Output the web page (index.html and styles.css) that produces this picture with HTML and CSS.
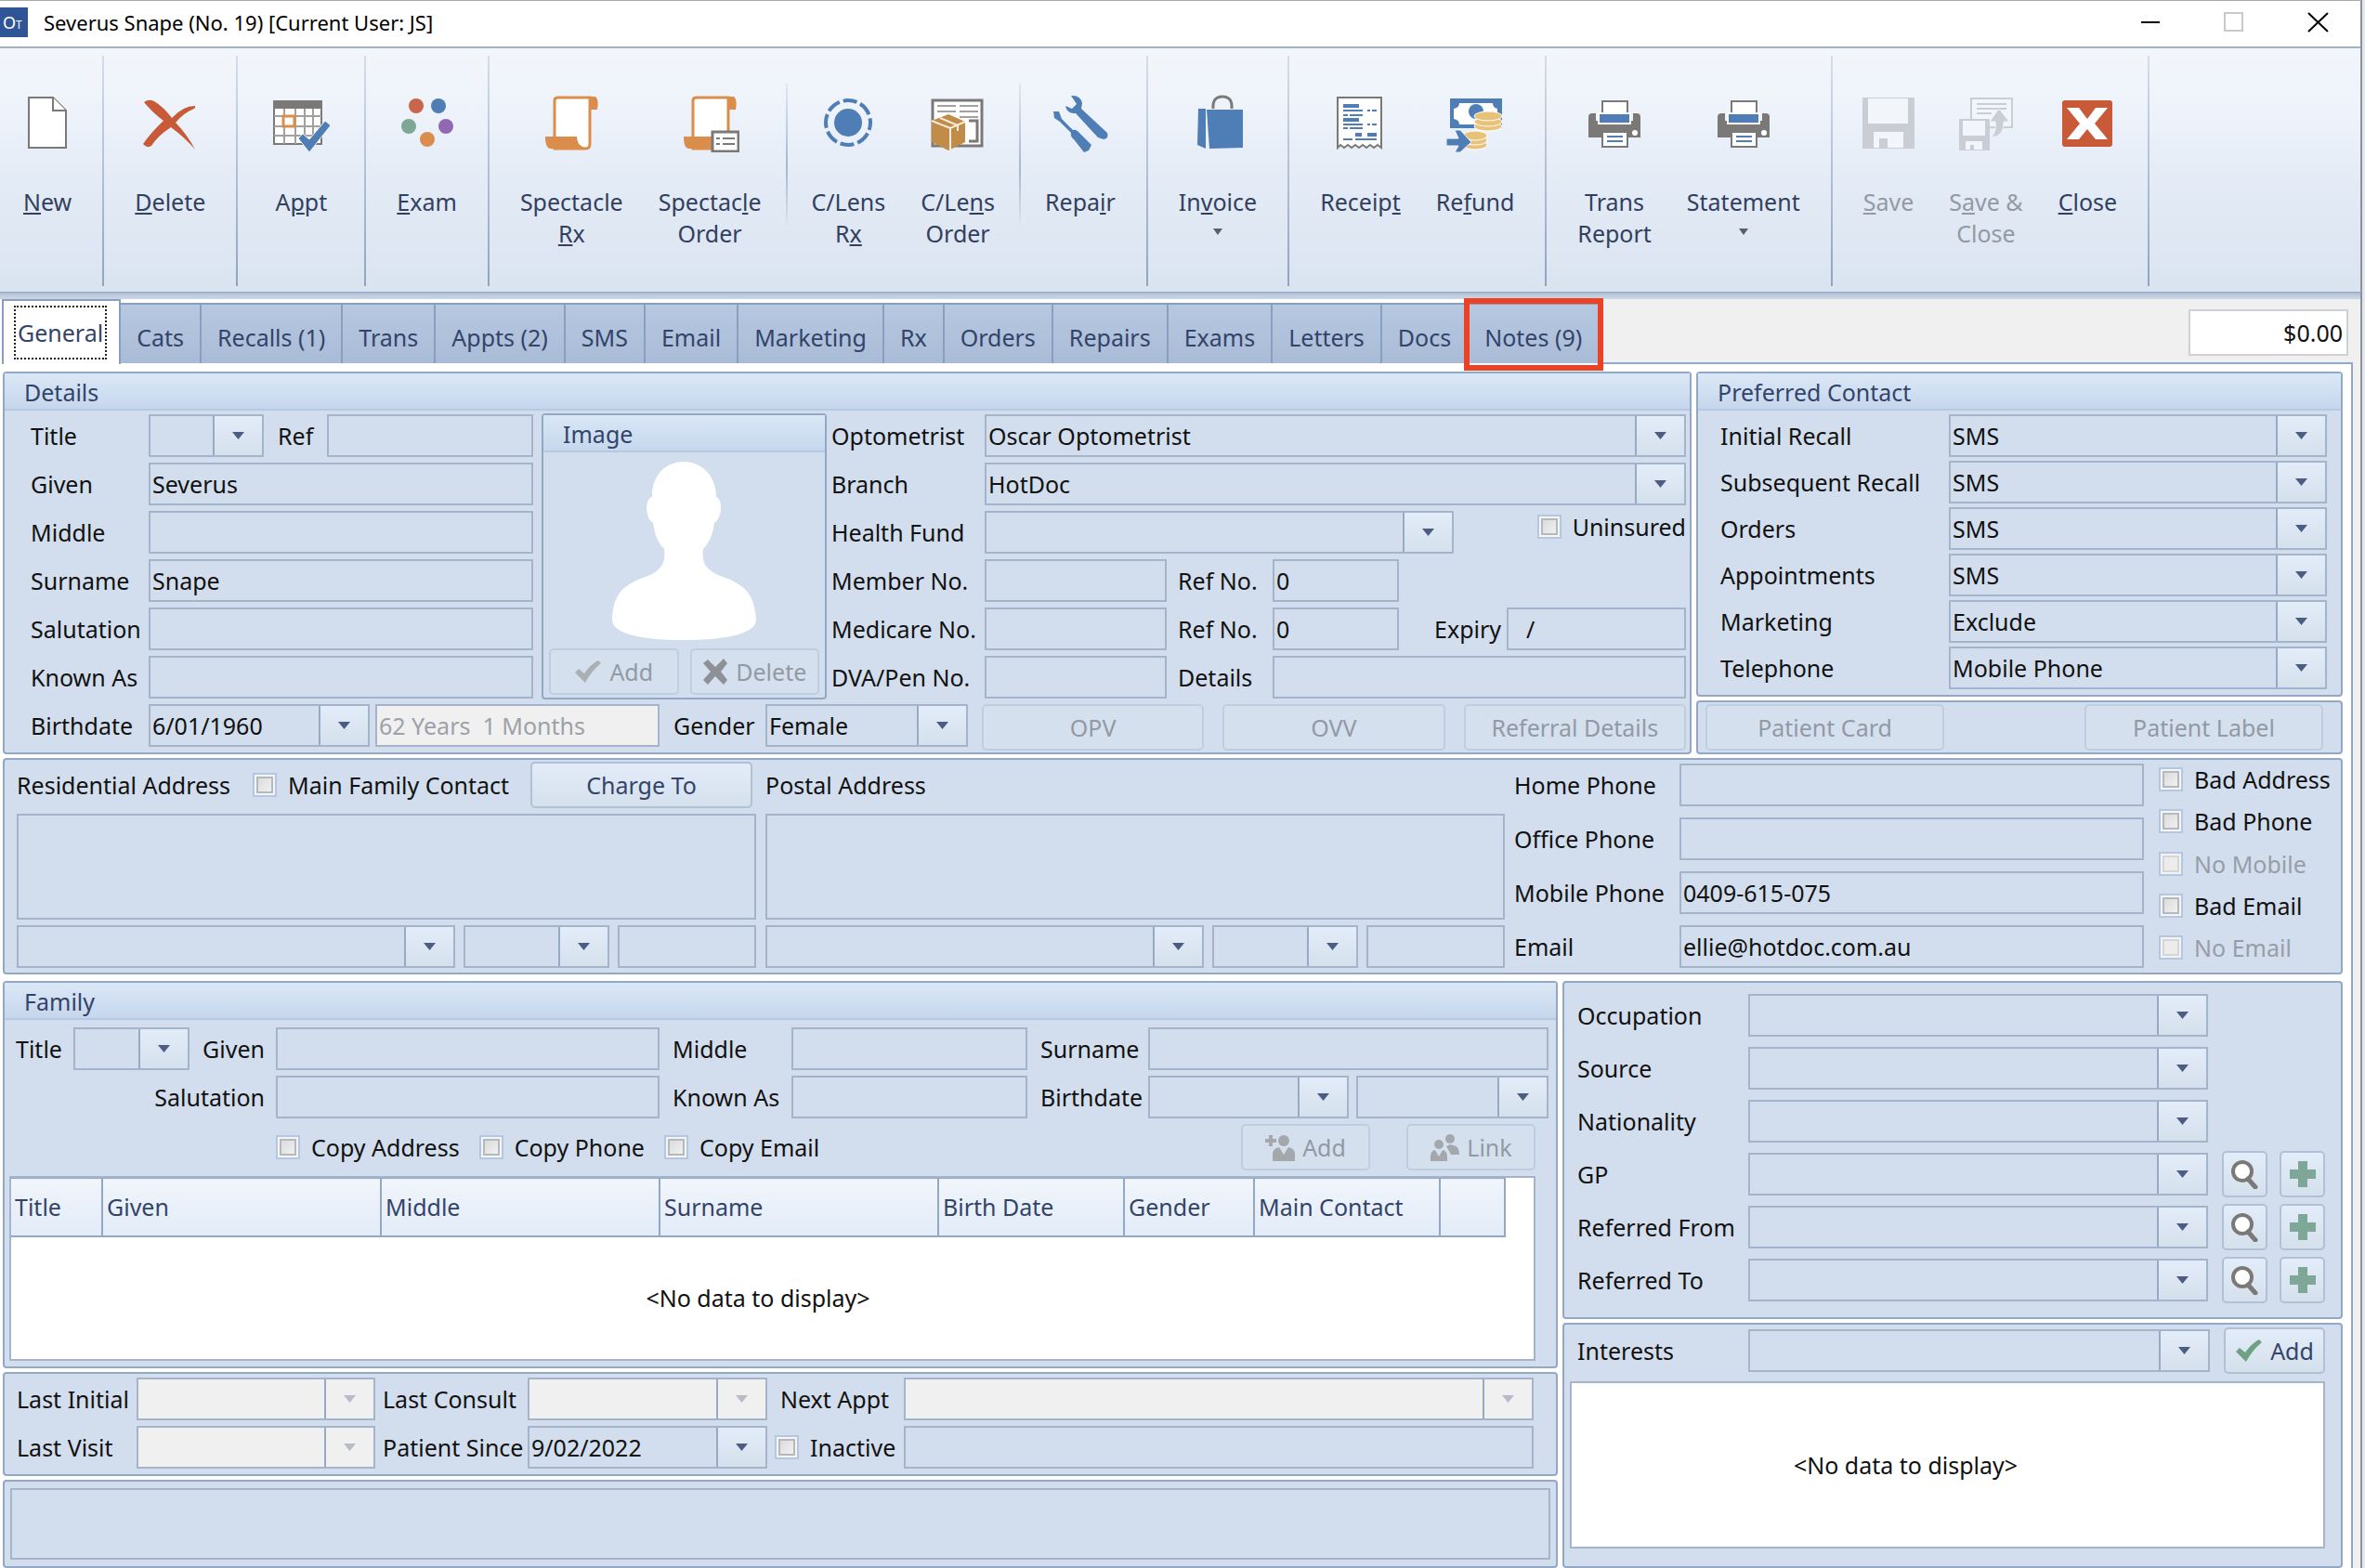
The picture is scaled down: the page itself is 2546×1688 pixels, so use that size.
FILE: index.html
```html
<!DOCTYPE html>
<html lang="en">
<head>
    <meta charset="UTF-8">
    <meta name="viewport" content="width=device-width, initial-scale=1.0">
    <title>Severus Snape (No. 19) [Current User: JS]</title>
    <link rel="stylesheet" href="styles.css">
</head>
<body>
    <!-- Shared icons -->
    <svg class="sprite" xmlns="http://www.w3.org/2000/svg">
        <symbol id="i-printer" viewBox="0 0 64 64">
            <path d="M4 26q0-4 4-4h4v8h40v-8h4q4 0 4 4v22H4z" fill="#7b7977"/>
            <rect x="19" y="9" width="27" height="20" fill="#fff" stroke="#7b7977" stroke-width="2"/>
            <rect x="15" y="22" width="34" height="11" fill="#4f7db5" stroke="#fff" stroke-width="2"/>
            <rect x="19" y="42" width="27" height="16" fill="#fff" stroke="#7b7977" stroke-width="2"/>
            <path d="M24 47h17M24 52h17" stroke="#4f7db5" stroke-width="2"/>
            <circle cx="54" cy="43" r="3" fill="#fff"/>
        </symbol>
        <symbol id="i-check" viewBox="0 0 30 26">
            <path d="M1 14l4-4 6 5Q18 5 26 1l3 3Q19 12 12 25z" fill="currentColor"/>
        </symbol>
        <symbol id="i-search" viewBox="0 0 30 32">
            <circle cx="12" cy="13" r="10" fill="#fff" stroke="#7b7977" stroke-width="4"/>
            <path d="M18 21l8 9" stroke="#7b7977" stroke-width="5" stroke-linecap="round"/>
        </symbol>
        <symbol id="i-plus" viewBox="0 0 28 28">
            <path d="M9 0h10v9h9v10h-9v9H9v-9H0V9h9z" fill="#7fa797"/>
        </symbol>
        <symbol id="i-scroll" viewBox="0 0 64 64">
            <path d="M14 4h44q4 3 2 14h-8V7z" fill="#db8d4c"/>
            <path d="M14 8q0-3 4-3h34v50q0 5-5 5H14z" fill="#fff" stroke="#db8d4c" stroke-width="3"/>
            <path d="M4 47h34q0 9 8 12l-1 1H10q-6 0-6-13z" fill="#db8d4c"/>
        </symbol>
    </svg>

    <div class="window">
        <header class="titlebar">
            <span class="app-logo">O<small>T</small></span>
            <h1 class="window-title">Severus Snape (No. 19) [Current User: JS]</h1>
            <div class="window-controls">
                <button aria-label="Minimise"><svg width="24" height="24"><path d="M1 12h20" stroke="#000" stroke-width="2"/></svg></button>
                <button aria-label="Maximise" disabled><svg width="24" height="24"><rect x="1" y="2" width="19" height="19" fill="none" stroke="#c9c9c9" stroke-width="2"/></svg></button>
                <button aria-label="Close window"><svg width="24" height="24"><path d="M1 2l21 20M22 2L1 22" stroke="#000" stroke-width="2"/></svg></button>
            </div>
        </header>

        <nav class="ribbon" aria-label="Actions">
            <div class="ribbon-group">
                <button class="ribbon-button">
                    <svg viewBox="0 0 64 64"><path d="M12 5h26l14 14v40H12z" fill="#fff" stroke="#7b7977" stroke-width="2"/><path d="M38 5v14h14" fill="#fff" stroke="#7b7977" stroke-width="2"/></svg>
                    <span><u>N</u>ew</span>
                </button>
            </div>
            <div class="ribbon-group">
                <button class="ribbon-button">
                    <svg viewBox="0 0 64 64"><path d="M4 10q5-4 11-1 10 6 19 18Q46 14 59 14q1 2-1 3-12 5-20 15 12 12 21 29Q48 48 33 37 19 46 12 57q-5 3-9-2Q12 42 25 30 13 21 4 10z" fill="#c85a38"/></svg>
                    <span><u>D</u>elete</span>
                </button>
            </div>
            <div class="ribbon-group">
                <button class="ribbon-button wide">
                    <svg viewBox="0 0 64 64"><path d="M3 9h51v46H3z" fill="#fff" stroke="#7b7977" stroke-width="2"/><path d="M2 8h53v9H2z" fill="#7b7977"/><path d="M14 17v38M26 17v38M36 17v38M45 17v38M3 25h51M3 36h51M3 46h51" stroke="#a3a1a0" stroke-width="2"/><rect x="13" y="25" width="12" height="11" fill="#fff" stroke="#db8d4c" stroke-width="3"/><path d="M29 49l5-5 7 6 17-20 6 5-23 29z" fill="#4f7db5" stroke="#f2f6fc"/></svg>
                    <span>A<u>p</u>pt</span>
                </button>
            </div>
            <div class="ribbon-group">
                <button class="ribbon-button">
                    <svg viewBox="0 0 64 64"><circle cx="20" cy="14" r="8" fill="#c9664a"/><circle cx="44" cy="14" r="8" fill="#4f7db5"/><circle cx="12" cy="36" r="8" fill="#7fa797"/><circle cx="52" cy="36" r="8" fill="#9268b4"/><circle cx="32" cy="50" r="8" fill="#db8d4c"/></svg>
                    <span><u>E</u>xam</span>
                </button>
            </div>
            <div class="ribbon-group">
                <button class="ribbon-button">
                    <svg><use href="#i-scroll"/></svg>
                    <span>Spectacle<br><u>R</u>x</span>
                </button>
                <button class="ribbon-button">
                    <svg viewBox="0 0 64 64"><use href="#i-scroll"/><rect x="35" y="42" width="28" height="21" fill="#fff" stroke="#7b7977" stroke-width="3"/><path d="M39 49h4M39 55h4M46 49h13M46 55h13" stroke="#7b7977" stroke-width="2"/></svg>
                    <span>Spectac<u>l</u>e<br>Order</span>
                </button>
                <i class="ribbon-divider"></i>
                <button class="ribbon-button">
                    <svg viewBox="0 0 64 64"><circle cx="32" cy="32" r="15" fill="#4f7db5"/><circle cx="32" cy="32" r="24" fill="none" stroke="#4f7db5" stroke-width="4" stroke-dasharray="15 4" stroke-dashoffset="7"/></svg>
                    <span>C/Lens<br>R<u>x</u></span>
                </button>
                <button class="ribbon-button">
                    <svg viewBox="0 0 64 64"><rect x="5" y="8" width="53" height="49" fill="#fff" stroke="#7b7977" stroke-width="3"/><path d="M10 14h20M34 14h20M10 20h20M34 20h20M34 26h20" stroke="#a3a1a0" stroke-width="2"/><path d="M44 30h9v22h-9" fill="none" stroke="#7b7977" stroke-width="3"/><path d="M4 30l18-7 18 8v22L22 62 4 53z" fill="#c08c48"/><path d="M4 30l20 8 16-7M24 38v23M13 27l19 8v6" fill="none" stroke="#f7eddc" stroke-width="2"/></svg>
                    <span>C/Le<u>n</u>s<br>Order</span>
                </button>
                <i class="ribbon-divider"></i>
                <button class="ribbon-button">
                    <svg viewBox="0 0 64 64"><path d="M22 3q10-1 12 8l-1 6 28 26q2 6-4 7l-6-2-24-26q-9 1-11-8l7 3 5-5z" fill="#4f7db5"/><path d="M3 20l6 0 3 8 12 12q3-1 6 2l14 14-3 6-5 2-11-14q-4-3-3-7L10 31l-6-4z" fill="#4f7db5"/></svg>
                    <span>Repa<u>i</u>r</span>
                </button>
            </div>
            <div class="ribbon-group">
                <button class="ribbon-button">
                    <svg viewBox="0 0 64 64"><path d="M27 17q-1-13 10-13t10 13" fill="none" stroke="#7b7977" stroke-width="3"/><path d="M20 18h39v41l-36 1z" fill="#4f7db5"/><path d="M11 17h8v43l-9-4z" fill="#4f7db5"/></svg>
                    <span>In<u>v</u>oice<br><b class="caret"></b></span>
                </button>
            </div>
            <div class="ribbon-group">
                <button class="ribbon-button">
                    <svg viewBox="0 0 64 64"><path d="M8 5h47v54l-4-3-4 3-4-3-4 3-4-3-4 3-4-3-4 3-4-3-4 3-4-3-3 3z" fill="#fff" stroke="#7b7977" stroke-width="2"/><path d="M14 14h17M14 29h17M27 45h7M40 45h10" stroke="#4f7db5" stroke-width="4"/><path d="M14 19h21M40 19h3M45 19h5M14 24h5M21 24h14M14 34h21M40 34h3M45 34h5M14 38h5M21 38h14M14 50h10M27 50h23" stroke="#4f7db5" stroke-width="2"/></svg>
                    <span>Receip<u>t</u></span>
                </button>
                <button class="ribbon-button">
                    <svg viewBox="0 0 64 64"><path d="M5 6h56v32H5z" fill="#4f7db5"/><path d="M15 11h36q0 5 5 6v11q-5 1-5 6H15q0-5-6-6V17q6-1 6-6z" fill="#fff"/><circle cx="33" cy="20" r="8" fill="#4f7db5"/><g fill="#e9c27a" stroke="#fff"><ellipse cx="46" cy="36" rx="15" ry="5"/><ellipse cx="46" cy="31" rx="15" ry="5"/><ellipse cx="46" cy="25" rx="15" ry="5"/><ellipse cx="32" cy="56" rx="13" ry="5"/><ellipse cx="32" cy="51" rx="13" ry="5"/><ellipse cx="32" cy="46" rx="13" ry="5"/></g><path d="M1 49h13l-4-9h6l12 13-12 11h-6l4-7H1z" fill="#4f7db5" stroke="#f2f6fc"/></svg>
                    <span>Re<u>f</u>und</span>
                </button>
            </div>
            <div class="ribbon-group">
                <button class="ribbon-button">
                    <svg><use href="#i-printer"/></svg>
                    <span>Trans<br>Report</span>
                </button>
                <button class="ribbon-button">
                    <svg><use href="#i-printer"/></svg>
                    <span>Statement<br><b class="caret"></b></span>
                </button>
            </div>
            <div class="ribbon-group">
                <button class="ribbon-button" disabled>
                    <svg viewBox="0 0 64 64"><path d="M4 5h56v55H4z" fill="#cacdd3"/><path d="M10 6h43v27H10zM16 42h32v17H31V49h-9v10h-6z" fill="#f2f5fa"/></svg>
                    <span><u>S</u>ave</span>
                </button>
                <button class="ribbon-button" disabled>
                    <svg viewBox="0 0 64 64"><rect x="16" y="6" width="44" height="31" fill="#f2f5fa" stroke="#cacdd3" stroke-width="2"/><path d="M22 12h32M22 17h32M22 22h16" stroke="#cacdd3" stroke-width="2"/><path d="M46 17l11 14h-6q1 16-14 17 7-6 5-17h-6z" fill="#cacdd3" stroke="#eef3fa"/><path d="M3 28h33v34H3z" fill="#cacdd3"/><path d="M7 30h24v16H7zM10 52h18v9h-9v-5h-4v5h-5z" fill="#f2f5fa"/></svg>
                    <span>S<u>a</u>ve &amp;<br>Close</span>
                </button>
                <button class="ribbon-button">
                    <svg viewBox="0 0 64 64"><rect x="5" y="8" width="54" height="50" rx="3" fill="#c85a38"/><path d="M10 16h13l9 12 9-12h13L40 33l14 17H41l-9-11-9 11H10l14-17z" fill="#fff"/></svg>
                    <span><u>C</u>lose</span>
                </button>
            </div>
        </nav>

        <div class="tab-row">
            <div class="tabs" role="tablist">
                <button class="tab active" role="tab" aria-selected="true"><span>General</span></button>
                <button class="tab" role="tab">Cats</button>
                <button class="tab" role="tab">Recalls (1)</button>
                <button class="tab" role="tab">Trans</button>
                <button class="tab" role="tab">Appts (2)</button>
                <button class="tab" role="tab">SMS</button>
                <button class="tab" role="tab">Email</button>
                <button class="tab" role="tab">Marketing</button>
                <button class="tab" role="tab">Rx</button>
                <button class="tab" role="tab">Orders</button>
                <button class="tab" role="tab">Repairs</button>
                <button class="tab" role="tab">Exams</button>
                <button class="tab" role="tab">Letters</button>
                <button class="tab" role="tab">Docs</button>
                <button class="tab marked" role="tab">Notes (9)</button>
            </div>
            <input class="balance" type="text" value="$0.00" aria-label="Balance" readonly>
        </div>

        <main class="page">
            <div class="top-row">
                <section class="panel details">
                    <h2 class="panel-header">Details</h2>
                    <div class="details-body">
                        <div class="names">
                            <label for="title">Title</label>
                            <div class="line">
                                <select id="title" class="short"><option></option></select>
                                <label for="ref">Ref</label>
                                <input type="text" id="ref">
                            </div>
                            <label for="given">Given</label>
                            <input type="text" id="given" value="Severus">
                            <label for="middle">Middle</label>
                            <input type="text" id="middle">
                            <label for="surname">Surname</label>
                            <input type="text" id="surname" value="Snape">
                            <label for="salutation">Salutation</label>
                            <input type="text" id="salutation">
                            <label for="known">Known As</label>
                            <input type="text" id="known">
                        </div>
                        <section class="panel image-panel">
                            <h3 class="panel-header">Image</h3>
                            <svg class="avatar" viewBox="0 0 155 192"><path d="M77 0c21 0 35 17 35 38 7 2 7 22-2 28-2 14-6 22-12 28-2 16 4 22 16 28 26 9 39 17 41 48 0 14-27 22-78 22S0 184 0 170c1-31 15-39 41-48 12-6 17-14 15-28-6-6-10-14-12-28-9-6-9-26-1-28C42 17 56 0 77 0z" fill="#fff"/></svg>
                            <div class="image-buttons">
                                <button class="button" disabled><svg width="30" height="26"><use href="#i-check"/></svg>Add</button>
                                <button class="button" disabled><svg width="28" height="28"><path d="M1 5l5-4 8 8 9-9 4 5-7 9 7 9-4 5-9-9-8 9-5-5 8-9z" fill="#8d9196"/></svg>Delete</button>
                            </div>
                        </section>
                        <div class="clinical">
                            <label for="optometrist">Optometrist</label>
                            <select id="optometrist"><option>Oscar Optometrist</option></select>
                            <label for="branch">Branch</label>
                            <select id="branch"><option>HotDoc</option></select>
                            <label for="fund">Health Fund</label>
                            <div class="line">
                                <select id="fund"><option></option></select>
                                <label class="check uninsured"><input type="checkbox">Uninsured</label>
                            </div>
                            <label for="member">Member No.</label>
                            <div class="line tight">
                                <input type="text" id="member" class="number">
                                <label for="member-ref" class="ref-label">Ref No.</label>
                                <input type="text" id="member-ref" class="ref" value="0">
                            </div>
                            <label for="medicare">Medicare No.</label>
                            <div class="line tight">
                                <input type="text" id="medicare" class="number">
                                <label for="medicare-ref" class="ref-label">Ref No.</label>
                                <input type="text" id="medicare-ref" class="ref" value="0">
                                <label for="expiry" class="expiry-label">Expiry</label>
                                <input type="text" id="expiry" value="  /">
                            </div>
                            <label for="dva">DVA/Pen No.</label>
                            <div class="line tight">
                                <input type="text" id="dva" class="number">
                                <label for="dva-details" class="ref-label">Details</label>
                                <input type="text" id="dva-details">
                            </div>
                        </div>
                    </div>
                    <div class="birth-row">
                        <label for="birthdate">Birthdate</label>
                        <select id="birthdate" class="date"><option>6/01/1960</option></select>
                        <input type="text" class="age" value="62 Years  1 Months" aria-label="Age" disabled>
                        <label for="gender" class="gender-label">Gender</label>
                        <select id="gender" class="gender"><option>Female</option></select>
                        <div class="exam-buttons">
                            <button class="button" disabled>OPV</button>
                            <button class="button" disabled>OVV</button>
                            <button class="button" disabled>Referral Details</button>
                        </div>
                    </div>
                </section>

                <div class="side">
                    <section class="panel">
                        <h2 class="panel-header">Preferred Contact</h2>
                        <div class="contact-grid">
                            <label for="initial-recall">Initial Recall</label>
                            <select id="initial-recall"><option>SMS</option></select>
                            <label for="next-recall">Subsequent Recall</label>
                            <select id="next-recall"><option>SMS</option></select>
                            <label for="orders">Orders</label>
                            <select id="orders"><option>SMS</option></select>
                            <label for="appointments">Appointments</label>
                            <select id="appointments"><option>SMS</option></select>
                            <label for="marketing">Marketing</label>
                            <select id="marketing"><option>Exclude</option></select>
                            <label for="telephone">Telephone</label>
                            <select id="telephone"><option>Mobile Phone</option></select>
                        </div>
                    </section>
                    <section class="panel print-panel">
                        <button class="button" disabled>Patient Card</button>
                        <button class="button" disabled>Patient Label</button>
                    </section>
                </div>
            </div>

            <section class="panel address-panel">
                <div class="address">
                    <div class="address-head">
                        <label for="residential">Residential Address</label>
                        <label class="check family-contact"><input type="checkbox">Main Family Contact</label>
                        <button class="button charge">Charge To</button>
                    </div>
                    <textarea id="residential"></textarea>
                    <div class="suburb-row">
                        <select aria-label="Residential suburb"><option></option></select>
                        <select class="state" aria-label="Residential state"><option></option></select>
                        <input type="text" class="postcode" aria-label="Residential postcode">
                    </div>
                </div>
                <div class="address">
                    <div class="address-head">
                        <label for="postal">Postal Address</label>
                    </div>
                    <textarea id="postal"></textarea>
                    <div class="suburb-row">
                        <select aria-label="Postal suburb"><option></option></select>
                        <select class="state" aria-label="Postal state"><option></option></select>
                        <input type="text" class="postcode" aria-label="Postal postcode">
                    </div>
                </div>
                <div class="phones">
                    <label for="home">Home Phone</label>
                    <input type="text" id="home">
                    <label for="office">Office Phone</label>
                    <input type="text" id="office">
                    <label for="mobile">Mobile Phone</label>
                    <input type="text" id="mobile" value="0409-615-075">
                    <label for="email">Email</label>
                    <input type="text" id="email" value="ellie@hotdoc.com.au">
                </div>
                <div class="flags">
                    <label class="check"><input type="checkbox">Bad Address</label>
                    <label class="check"><input type="checkbox">Bad Phone</label>
                    <label class="check off"><input type="checkbox" disabled>No Mobile</label>
                    <label class="check"><input type="checkbox">Bad Email</label>
                    <label class="check off"><input type="checkbox" disabled>No Email</label>
                </div>
            </section>

            <div class="bottom-row">
                <div class="column">
                    <section class="panel">
                        <h2 class="panel-header">Family</h2>
                        <div class="family-grid">
                            <label for="f-title">Title</label>
                            <select id="f-title"><option></option></select>
                            <label for="f-given" class="right">Given</label>
                            <input type="text" id="f-given">
                            <label for="f-middle">Middle</label>
                            <input type="text" id="f-middle">
                            <label for="f-surname">Surname</label>
                            <input type="text" id="f-surname">
                            <label for="f-salutation" class="right span">Salutation</label>
                            <input type="text" id="f-salutation">
                            <label for="f-known">Known As</label>
                            <input type="text" id="f-known">
                            <label for="f-birth">Birthdate</label>
                            <div class="birth-pair">
                                <select id="f-birth"><option></option></select>
                                <select aria-label="Gender"><option></option></select>
                            </div>
                        </div>
                        <div class="copy-row">
                            <label class="check"><input type="checkbox">Copy Address</label>
                            <label class="check"><input type="checkbox">Copy Phone</label>
                            <label class="check"><input type="checkbox">Copy Email</label>
                            <div class="copy-buttons">
                                <button class="button" disabled><svg width="32" height="30" fill="#a4a8ab"><path d="M4 2h4v4h4v4H8v4H4v-4H0V6h4z"/><circle cx="20" cy="8" r="6"/><path d="M8 30v-7q0-7 7-8l5 8 5-8q7 1 7 8v7z"/></svg>Add</button>
                                <button class="button" disabled><svg width="32" height="30" fill="#a4a8ab"><circle cx="22" cy="6" r="5"/><path d="M18 14l4-2 4 1q6 1 6 10h-9z"/><circle cx="10" cy="12" r="5"/><path d="M1 30v-5q0-6 5-7l4 7 4-7q5 1 5 7v5z"/></svg>Link</button>
                            </div>
                        </div>
                        <div class="family-list">
                            <table>
                                <colgroup><col class="c-title"><col class="c-name"><col class="c-name"><col class="c-name"><col class="c-mid"><col class="c-gender"><col class="c-mid"><col class="c-end"></colgroup>
                                <thead>
                                    <tr><th>Title</th><th>Given</th><th>Middle</th><th>Surname</th><th>Birth Date</th><th>Gender</th><th>Main Contact</th><th></th></tr>
                                </thead>
                                <tbody>
                                    <tr><td colspan="8">&lt;No data to display&gt;</td></tr>
                                </tbody>
                            </table>
                        </div>
                    </section>
                    <section class="panel visits">
                        <label for="last-initial">Last Initial</label>
                        <select id="last-initial" disabled><option></option></select>
                        <label for="last-consult" class="inset">Last Consult</label>
                        <select id="last-consult" disabled><option></option></select>
                        <label for="next-appt" class="inset-wide">Next Appt</label>
                        <select id="next-appt" disabled><option></option></select>
                        <label for="last-visit">Last Visit</label>
                        <select id="last-visit" disabled><option></option></select>
                        <label for="since" class="inset">Patient Since</label>
                        <select id="since"><option>9/02/2022</option></select>
                        <label class="check inset"><input type="checkbox">Inactive</label>
                        <input type="text" aria-label="Inactive reason">
                    </section>
                    <section class="panel memo">
                        <textarea aria-label="Memo"></textarea>
                    </section>
                </div>

                <div class="column">
                    <section class="panel referral">
                        <label for="occupation">Occupation</label>
                        <select id="occupation"><option></option></select>
                        <label for="source">Source</label>
                        <select id="source"><option></option></select>
                        <label for="nationality">Nationality</label>
                        <select id="nationality"><option></option></select>
                        <label for="gp">GP</label>
                        <select id="gp"><option></option></select>
                        <button class="button icon-button" aria-label="Find GP"><svg width="30" height="32"><use href="#i-search"/></svg></button>
                        <button class="button icon-button" aria-label="New GP"><svg width="28" height="28"><use href="#i-plus"/></svg></button>
                        <label for="referred-from">Referred From</label>
                        <select id="referred-from"><option></option></select>
                        <button class="button icon-button" aria-label="Find referrer"><svg width="30" height="32"><use href="#i-search"/></svg></button>
                        <button class="button icon-button" aria-label="New referrer"><svg width="28" height="28"><use href="#i-plus"/></svg></button>
                        <label for="referred-to">Referred To</label>
                        <select id="referred-to"><option></option></select>
                        <button class="button icon-button" aria-label="Find referee"><svg width="30" height="32"><use href="#i-search"/></svg></button>
                        <button class="button icon-button" aria-label="New referee"><svg width="28" height="28"><use href="#i-plus"/></svg></button>
                    </section>
                    <section class="panel interests">
                        <div class="interest-row">
                            <label for="interests">Interests</label>
                            <select id="interests"><option></option></select>
                            <button class="button add-interest"><svg width="30" height="26"><use href="#i-check"/></svg>Add</button>
                        </div>
                        <div class="interest-list">&lt;No data to display&gt;</div>
                    </section>
                </div>
            </div>
        </main>
    </div>
</body>
</html>
```
FILE: styles.css
```css
* {
    box-sizing: border-box;
}
body {
    margin: 0;
    background: #e3e8ef;
    color: #111;
    font-family: "Noto Sans", "Open Sans", sans-serif;
    font-size: 25px;
    line-height: 34px;
}
button, input, select, textarea {
    font: inherit;
    color: inherit;
    margin: 0;
}
h1, h2, h3 {
    margin: 0;
    font-size: 25px;
    font-weight: 400;
}
label {
    white-space: nowrap;
}
.sprite {
    display: none;
}
.window {
    min-height: 100vh;
    margin-right: 3px;
    background: #f0f0f0;
    border-top: 1px solid #a8a8a8;
    border-right: 2px solid #8d9199;
}

/* Title bar */
.titlebar {
    display: flex;
    align-items: center;
    height: 49px;
    padding-bottom: 3px;
    background: #fff;
}
.app-logo {
    width: 30px;
    height: 32px;
    background: #2f5597;
    color: #fff;
    font-size: 18px;
    line-height: 32px;
    padding-left: 3px;
}
.app-logo small {
    font-size: 12px;
}
.window-title {
    margin-left: 17px;
    color: #000;
    font-size: 22px;
}
.window-controls {
    display: flex;
    gap: 66px;
    margin-left: auto;
    margin-right: 33px;
}
.window-controls button {
    display: flex;
    padding: 0;
    border: none;
    background: none;
}

/* Ribbon */
.ribbon {
    display: flex;
    height: 272px;
    padding: 8px 0 14px;
    border-top: 2px solid #9fb2cc;
    background: linear-gradient(#f3f6fa, #eef3fb 25%, #e2eaf5 60%, #dae4f0) 0 0 / 100% 262px no-repeat,
        linear-gradient(#8ea4c2, #b8c6da 30%, #cdd7e5) 0 262px / 100% 8px no-repeat;
}
.ribbon-group {
    display: flex;
    padding: 0 14px;
    border-right: 2px solid;
    border-image: linear-gradient(#d5dde8, #8fa3c0) 1;
}
.ribbon-group:first-child {
    padding-left: 6px;
}
.ribbon-button {
    display: flex;
    flex-direction: column;
    align-items: center;
    gap: 36px;
    padding: 40px 19px 0;
    border: none;
    background: none;
    color: #323f60;
    white-space: nowrap;
}
.ribbon-button.wide {
    width: 108px;
}
.ribbon-button svg {
    width: 64px;
    height: 64px;
    flex: none;
    margin: 0 -8px;
}
.ribbon-button:disabled {
    color: #9499a3;
}
.ribbon-divider {
    width: 2px;
    height: 152px;
    margin: 30px 7px 0;
    background: linear-gradient(#e0e7f1, #a5b6ce 60%, #dce4ee);
}
.caret {
    display: inline-block;
    vertical-align: 8px;
    border: 5px solid transparent;
    border-top: 7px solid #5a5f6b;
    border-bottom: none;
}

/* Tabs */
.tab-row {
    display: flex;
    justify-content: space-between;
    align-items: flex-end;
    height: 70px;
    margin-right: 8px;
    border-bottom: 2px solid #93a8c5;
}
.tabs {
    display: flex;
    align-items: flex-end;
    height: 70px;
    padding-left: 2px;
    margin-bottom: -2px;
    background: #fff;
}
.tab {
    height: 65px;
    padding: 6px 17px 0;
    margin-bottom: 1px;
    border: solid #889fc0;
    border-width: 2px 2px 0 0;
    background: linear-gradient(#b7c8e1, #a9bbd6);
    color: #33446a;
    white-space: nowrap;
}
.tab.active {
    height: 70px;
    padding: 0 13px 0 11px;
    margin-bottom: 0;
    border-left-width: 2px;
    background: #fff;
}
.tab.active span {
    display: block;
    padding: 10px 2px;
    border: 2px dotted #222;
}
.tab.marked {
    position: relative;
}
/* Call-out frame round the Notes tab */
.tab.marked::after {
    content: "";
    position: absolute;
    inset: -7px -6px -8px -5px;
    border: 6px solid #ec4124;
    z-index: 2;
}

/* Form controls */
input[type="text"], select, textarea {
    width: 100%;
    min-width: 0;
    height: 46px;
    padding: 0 2px;
    border: 2px solid #a4b4cb;
    border-radius: 0;
    background-color: #d2deed;
    resize: none;
    outline: none;
}
input[type="text"].balance {
    width: 172px;
    height: 50px;
    padding: 0 4px;
    margin: 0 5px 7px 0;
    border-color: #cdd0d5;
    background: #fff;
    text-align: right;
}
select {
    appearance: none;
    background-image: url("data:image/svg+xml,%3Csvg xmlns='http://www.w3.org/2000/svg' width='13' height='8'%3E%3Cpath d='M0 0h13L6.5 8z' fill='%234d5c82'/%3E%3C/svg%3E"),
        linear-gradient(#97a9c3, #97a9c3), linear-gradient(#e3edf9, #d5e0ed);
    background-position: right 19px center, right 51px top, right top;
    background-size: 13px 8px, 2px 100%, 52px 100%;
    background-repeat: no-repeat;
}
select:disabled {
    opacity: 1;
    background-color: #f0f0f0;
    background-image: url("data:image/svg+xml,%3Csvg xmlns='http://www.w3.org/2000/svg' width='13' height='8'%3E%3Cpath d='M0 0h13L6.5 8z' fill='%23b7bcc6'/%3E%3C/svg%3E"),
        linear-gradient(#97a9c3, #97a9c3), linear-gradient(#f0f0f0, #f0f0f0);
}
input[type="text"]:disabled {
    background: #f0f0f0;
    color: #9da1a8;
}
textarea {
    display: block;
}
.check {
    display: flex;
    align-items: center;
    gap: 12px;
}
input[type="checkbox"] {
    appearance: none;
    flex: none;
    width: 26px;
    height: 26px;
    border: 2px solid #b3c6e2;
    background: linear-gradient(135deg, #dcdcde, #f0f0f0) center / 14px 14px no-repeat, linear-gradient(#b4b8bf, #b4b8bf) center / 18px 18px no-repeat, #f5f5f5;
}
input[type="checkbox"]:disabled {
    background: linear-gradient(#ececec, #ececec) center / 14px 14px no-repeat, linear-gradient(#d5d6d8, #d5d6d8) center / 18px 18px no-repeat, #f3f3f3;
}
.off {
    color: #979da8;
}
.button {
    display: flex;
    align-items: center;
    justify-content: center;
    gap: 8px;
    height: 50px;
    padding: 0;
    border: 2px solid #b1c0d5;
    border-radius: 5px;
    background: linear-gradient(#e3edf9, #d4e0ec);
    color: #33446a;
    white-space: nowrap;
}
.button:disabled {
    border-color: #bfcde0;
    background: #d5e0ee;
    color: #9299a5;
}
.button:disabled svg {
    color: #aaafb4;
}

/* Panels */
.page {
    padding: 8px 9px 0 3px;
    margin-right: 8px;
    border-right: 2px solid #93a8c5;
    background: #fff;
}
.panel {
    border: 2px solid #93a8c5;
    border-radius: 4px;
    background: #d2deed;
}
.panel-header {
    height: 40px;
    padding-left: 21px;
    border-bottom: 2px solid #b6c9e2;
    background: linear-gradient(#dae7f6, #c6d7ed);
    color: #33446a;
    line-height: 40px;
}
.top-row {
    display: grid;
    grid-template-columns: 1818fr 696fr;
    gap: 5px;
}
.details-body {
    display: flex;
    padding: 4px 4px 6px 28px;
}
.names, .clinical {
    display: grid;
    grid-auto-rows: 46px;
    row-gap: 6px;
    align-items: center;
}
.names {
    flex: 541 1 0;
    grid-template-columns: 127px 1fr;
}
.clinical {
    flex: 920 1 0;
    grid-template-columns: 165px 1fr;
}
.line {
    display: flex;
    align-items: center;
    gap: 15px;
}
.line.tight {
    gap: 0;
}
select.short {
    flex: none;
    width: 124px;
}
.uninsured {
    align-self: flex-start;
    margin-left: 75px;
}
input[type="text"].number {
    flex: none;
    width: 196px;
}
.ref-label {
    flex: none;
    width: 114px;
    padding-left: 12px;
}
input[type="text"].ref {
    flex: none;
    width: 136px;
}
.expiry-label {
    flex: none;
    width: 116px;
    padding-left: 38px;
}
#expiry {
    padding-left: 6px;
}
.image-panel {
    display: flex;
    flex-direction: column;
    align-items: center;
    flex: none;
    width: 307px;
    margin: -1px 5px -1px 9px;
}
.image-panel .panel-header {
    align-self: stretch;
}
.avatar {
    width: 155px;
    height: 192px;
    margin-top: 10px;
}
.image-buttons {
    display: flex;
    gap: 12px;
    align-self: stretch;
    margin: auto 6px 3px;
}
.image-buttons .button {
    flex: 1;
}
.birth-row {
    display: flex;
    padding: 0 4px 2px 28px;
}
.birth-row > label {
    flex: none;
    width: 127px;
    line-height: 46px;
}
.birth-row .gender-label {
    width: 99px;
}
select.date {
    width: 238px;
    flex: none;
}
input[type="text"].age {
    flex: none;
    width: 306px;
    margin: 0 15px 0 6px;
}
select.gender {
    flex: none;
    width: 218px;
}
.exam-buttons {
    display: flex;
    flex: 1;
    gap: 20px;
    margin-left: 15px;
}
.exam-buttons .button {
    flex: 1;
}
.side, .column {
    display: flex;
    flex-direction: column;
    gap: 4px;
}
.contact-grid {
    display: grid;
    grid-template-columns: 246px 1fr;
    grid-auto-rows: 46px;
    row-gap: 4px;
    align-items: center;
    padding: 4px 15px 6px 24px;
}
.print-panel {
    display: flex;
    justify-content: space-between;
    flex: 1;
    padding: 2px 19px 2px 8px;
}
.print-panel .button {
    width: 257px;
}

/* Address */
.address-panel {
    display: grid;
    grid-template-columns: 806fr 806fr 694fr 196px;
    margin: 4px 0 7px;
    padding: 2px 0 5px 13px;
}
.address {
    display: grid;
    grid-template-rows: 50px 114px 46px;
    row-gap: 6px;
    margin-right: 10px;
}
.address textarea {
    height: 114px;
}
.address-head {
    display: flex;
    align-items: center;
}
.family-contact {
    margin: 0 auto 0 24px;
}
.charge {
    width: 239px;
    margin-right: 4px;
}
.suburb-row {
    display: flex;
    gap: 9px;
}
select.state {
    flex: none;
    width: 157px;
}
input[type="text"].postcode {
    flex: none;
    width: 149px;
}
.phones {
    display: grid;
    grid-template-columns: 178px 1fr;
    grid-auto-rows: 46px;
    row-gap: 12px;
    align-items: center;
    padding-top: 2px;
    margin-right: 16px;
}
.flags {
    display: flex;
    flex-direction: column;
    justify-content: space-between;
    padding: 2px 0 5px;
}

/* Family */
.bottom-row {
    display: grid;
    grid-template-columns: 1674fr 840fr;
    gap: 5px;
}
.family-grid {
    display: grid;
    grid-template-columns: 62px 125px 93px 413fr 142px 254fr 130px 431fr;
    grid-auto-rows: 46px;
    row-gap: 6px;
    align-items: center;
    padding: 8px 8px 6px 12px;
}
.family-grid input + label {
    padding-left: 14px;
}
.family-grid .right {
    padding: 0 12px 0 0;
    text-align: right;
}
.family-grid input + label.span {
    grid-column: 1 / 4;
    padding: 0 12px 0 0;
}
.birth-pair {
    display: flex;
    gap: 8px;
}
.birth-pair select:first-child {
    flex: 216 1 0;
}
.birth-pair select:last-child {
    flex: 207 1 0;
}
.copy-row {
    display: flex;
    align-items: center;
    gap: 21px;
    padding: 0 22px 6px 292px;
}
.copy-buttons {
    display: flex;
    gap: 39px;
    margin-left: auto;
}
.copy-buttons .button {
    width: 139px;
}
.family-list {
    height: 199px;
    margin: 0 22px 6px 5px;
    border: 2px solid #a4b4cb;
    background: #fff;
}
.family-list table {
    width: calc(100% - 32px);
    height: 195px;
    table-layout: fixed;
    border-collapse: collapse;
}
.c-title {
    width: 98px;
}
.c-name {
    width: 300px;
}
.c-mid {
    width: 200px;
}
.c-gender {
    width: 140px;
}
.c-end {
    width: 70px;
}
.family-list th {
    height: 62px;
    padding: 0 4px;
    border: 2px solid #93a8c5;
    border-left-width: 0;
    border-top-width: 1px;
    background: linear-gradient(#f1f5fb, #e2ebf8);
    color: #33446a;
    font-weight: 400;
    text-align: left;
}
.family-list td {
    padding: 0;
    text-align: center;
}

/* Visits and memo */
.visits {
    display: grid;
    grid-template-columns: 129px 257fr 164px 258fr 147px 678fr;
    grid-auto-rows: 46px;
    row-gap: 6px;
    align-items: center;
    padding: 4px 24px 6px 13px;
}
.inset {
    padding-left: 8px;
}
.inset-wide {
    padding-left: 14px;
}
.memo {
    padding: 7px 6px;
}
.memo textarea {
    height: 77px;
}

/* Referral and interests */
.referral {
    display: grid;
    grid-template-columns: 184px 1fr 64px 62px;
    grid-auto-rows: 48px;
    row-gap: 9px;
    align-items: center;
    padding: 11px 17px 16px 14px;
}
.referral label {
    grid-column: 1;
}
.icon-button {
    width: 49px;
    justify-self: end;
}
.interests {
    display: flex;
    flex-direction: column;
    flex: 1;
    padding: 3px 17px 19px 6px;
}
.interest-row {
    display: flex;
    align-items: center;
    padding-left: 8px;
}
.interest-row label {
    flex: none;
    width: 184px;
}
.add-interest {
    flex: none;
    width: 109px;
    margin-left: 15px;
}
.add-interest svg {
    color: #6fa284;
}
.interest-list {
    display: flex;
    align-items: center;
    justify-content: center;
    flex: 1;
    margin-top: 8px;
    padding-right: 90px;
    border: 2px solid #a4b4cb;
    background: #fff;
}
```
